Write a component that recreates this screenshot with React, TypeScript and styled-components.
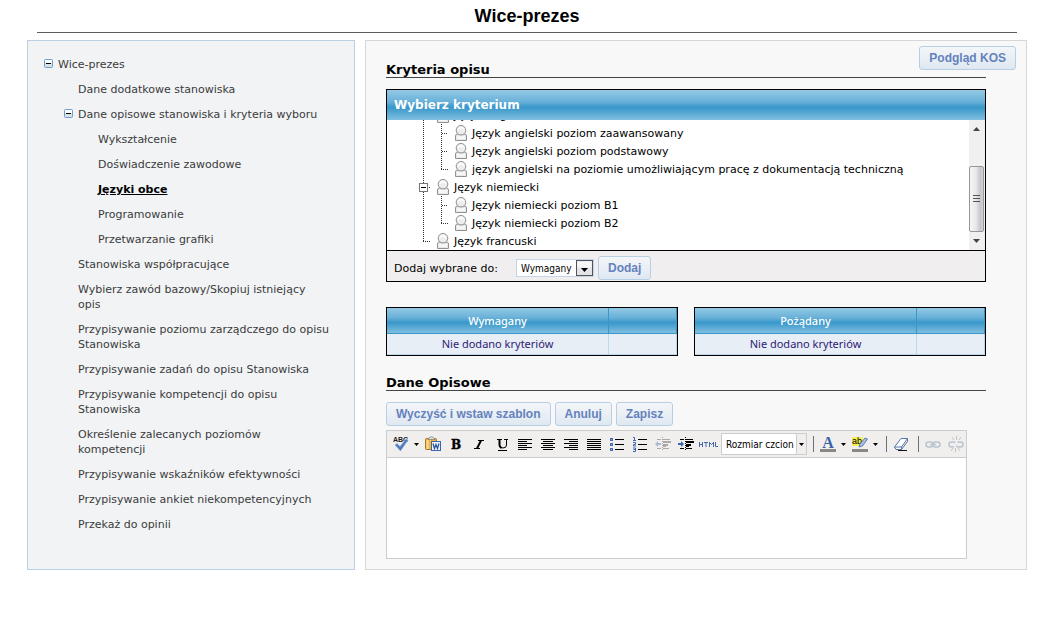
import React from "react";
import styled, { createGlobalStyle, css } from "styled-components";

const verdana = `Verdana, "DejaVu Sans", sans-serif`;
const compact = `Tahoma, "DejaVu Sans Condensed", sans-serif`;
const arial = `"Liberation Sans", Arial, sans-serif`;
const trebuchet = `"Noto Sans", sans-serif`;

const GlobalStyle = createGlobalStyle`
  *, *::before, *::after { box-sizing: border-box; }
  body { margin: 0; background: #fff; color: #000; font: 11px/15px ${verdana}; }
  ul { list-style: none; margin: 0; padding: 0; }
`;

const Page = styled.div`
  padding: 0 28px 24px 27px;
`;
const PageHeader = styled.header`
  margin: 0 10px 7px;
  border-bottom: 1px solid #5c5c5c;
  text-align: center;
`;
const PageTitle = styled.h1`
  margin: 0;
  padding: 6px 0 5px;
  font: bold 18px/21px ${arial};
`;
const Columns = styled.div`
  display: grid;
  grid-template-columns: 328px minmax(0, 1fr);
  gap: 10px;
`;

const Sidebar = styled.nav`
  border: 1px solid #b9cfe3;
  background: #f1f3f5;
  padding: 11px 24px 10px 10px;
`;
const NavList = styled.ul<{ $nested?: boolean }>`
  padding-left: ${(p) => (p.$nested ? 20 : 0)}px;
`;
const NavRow = styled.div`
  display: flex;
  align-items: flex-start;
  padding: 5px 0;
`;
const ToggleSlot = styled.span`
  flex: 0 0 20px;
  height: 13px;
  display: flex;
  align-items: center;
  padding-left: 6px;
`;
const ToggleButton = styled.button`
  width: 9px;
  height: 9px;
  padding: 0;
  border: 0;
  background: none;
  display: flex;
`;
const NavLink = styled.a<{ $active?: boolean }>`
  color: #3b3b3b;
  text-decoration: none;
  ${(p) => p.$active && css`
    color: #000;
    font-weight: bold;
    text-decoration: underline;
  `}
`;

const Main = styled.main`
  border: 1px solid #d7d7d7;
  background: #f8f8f8;
  padding: 5px 10px 10px 20px;
`;
const ActionBar = styled.div`
  display: flex;
  justify-content: flex-end;
  align-items: flex-start;
  height: 13px;
`;
const Content = styled.div`
  margin-right: 30px;
`;
const Button = styled.button`
  height: 24px;
  padding: 0 9px;
  border: 1px solid #b7cfe4;
  border-radius: 3px;
  background: linear-gradient(#f4f6f8, #dfe8f1);
  color: #6482bd;
  font: bold 12px/20px ${arial};
  white-space: nowrap;
`;
const SectionTitle = styled.h2`
  margin: 0;
  padding-top: 4px;
  border-bottom: 1px solid #444;
  font: bold 13px/14px ${verdana};
`;

const blueGradient = "linear-gradient(#94c9e5 0%, #67b0d8 40%, #3c99cb 56%, #3c99cb 60%, #80bfe0 100%)";

const Picker = styled.section`
  margin: 11px 0 25px;
  border: 1px solid #000;
`;
const PickerTitle = styled.h3`
  margin: 0;
  padding: 0 7px;
  background: ${blueGradient};
  color: #fff;
  font: bold 12px/30px ${verdana};
`;
const TreeArea = styled.div`
  display: flex;
  height: 130px;
  background: #fff;
`;
const TreeViewport = styled.div`
  flex: 1;
  display: flex;
  flex-direction: column;
  justify-content: flex-end;
  overflow: hidden;
  padding-left: 28px;
`;
const TreeRow = styled.li`
  display: flex;
  height: 18px;
  line-height: 20px;
  white-space: nowrap;
  svg { flex: none; }
`;
const TreeLabel = styled.span`
  padding-left: 3px;
`;
const ScrollTrack = styled.div`
  flex: 0 0 16px;
  display: flex;
  flex-direction: column;
  background: #f0f0f1;
  padding-right: 1px;
`;
const ScrollArrow = styled.button`
  height: 18px;
  padding: 0;
  border: 0;
  background: none;
  display: flex;
  align-items: center;
  justify-content: center;
`;
const ScrollThumb = styled.div`
  height: 66px;
  margin-top: auto;
  border: 1px solid #979797;
  border-radius: 2px;
  background: linear-gradient(90deg, #f5f5f5, #e9e9eb 45%, #c6c6ca 80%, #d4d4d8);
  display: flex;
  align-items: center;
  justify-content: center;
`;
const PickerFooter = styled.div`
  display: flex;
  align-items: center;
  height: 31px;
  padding: 3px 7px 0;
  border-top: 1px solid #000;
  background: #f0eeef;
`;
const FooterLabel = styled.label`
  flex: 0 0 121px;
  padding-top: 2px;
`;
const SelectFrame = styled.span<{ $width: number; $tone: string }>`
  display: flex;
  flex: 0 0 ${(p) => p.$width}px;
  min-width: 0;
  margin-left: 1px;
  border: 1px solid ${(p) => p.$tone};
  background: #fff;
`;
const SelectField = styled.select`
  appearance: none;
  flex: 1;
  min-width: 0;
  padding: 1px 0 0 4px;
  border: 0;
  background: #fff;
  color: #000;
  font: 10px/15px ${compact};
  text-overflow: clip;
`;
const FooterButtonSlot = styled.div`
  margin-left: 4px;
`;

const TablePair = styled.div`
  display: grid;
  grid-template-columns: 1fr 1fr;
  gap: 16px;
  margin-bottom: 16px;
`;
const CriteriaTable = styled.table`
  width: 100%;
  border: 1px solid #000;
  border-spacing: 0;
  table-layout: fixed;
  font: 11px/15px ${trebuchet};
  text-align: center;
  th {
    height: 26px;
    padding: 0;
    background: ${blueGradient};
    border-bottom: 1px solid #3996c9;
    border-right: 1px solid #3996c9;
    color: #fff;
    font-weight: 500;
  }
  td {
    height: 21px;
    padding: 0 0 2px;
    background: #e8eef5;
    border-right: 1px solid #bcd8e8;
    border-bottom: 1px solid #bcd8e8;
    color: #2e1a77;
  }
  col:last-child { width: 68px; }
`;

const ButtonRow = styled.div`
  display: flex;
  gap: 4px;
  margin: 11px 0 4px;
`;
const Editor = styled.div`
  margin-right: 19px;
  border: 1px solid #ccc;
`;
const Toolbar = styled.div`
  display: flex;
  align-items: center;
  height: 27px;
  padding: 0 0 0 2px;
  background: #f0efed;
  border-bottom: 1px solid #ccc;
`;
const Tool = styled.button<{ $narrow?: boolean }>`
  flex: 0 0 ${(p) => (p.$narrow ? 9 : 23)}px;
  height: 23px;
  padding: 0;
  border: 0;
  background: none;
  display: flex;
  align-items: center;
  justify-content: center;
`;
const Separator = styled.span`
  flex: 0 0 1px;
  height: 16px;
  margin: 0 2px 0 6px;
  background: #6a7078;
`;
const SizeArrow = styled.span`
  flex: 0 0 10px;
  height: 20px;
  border-left: 1px solid #ccc;
  background: #f0efed;
  display: flex;
  align-items: center;
  justify-content: center;
`;
const EditArea = styled.textarea`
  display: block;
  width: 100%;
  height: 100px;
  border: 0;
  padding: 4px;
  resize: none;
  outline: 0;
  background: #fff;
  font: 11px/15px ${verdana};
`;

function Minus() {
  return (
    <svg width="9" height="9" viewBox="0 0 9 9">
      <rect x=".5" y=".5" width="8" height="8" rx="1" fill="#d9dfe3" stroke="#6a9fce" />
      <path d="M1 1h7v3H1z" fill="#fff" />
      <path d="M2 4.5h5" stroke="#000" />
    </svg>
  );
}

type NavItem = { label: string; active?: boolean; children?: NavItem[] };
const navigation: NavItem[] = [
  {
    label: "Wice-prezes",
    children: [
      { label: "Dane dodatkowe stanowiska" },
      {
        label: "Dane opisowe stanowiska i kryteria wyboru",
        children: [
          { label: "Wykształcenie" },
          { label: "Doświadczenie zawodowe" },
          { label: "Języki obce", active: true },
          { label: "Programowanie" },
          { label: "Przetwarzanie grafiki" },
        ],
      },
      { label: "Stanowiska współpracujące" },
      { label: "Wybierz zawód bazowy/Skopiuj istniejący opis" },
      { label: "Przypisywanie poziomu zarządczego do opisu Stanowiska" },
      { label: "Przypisywanie zadań do opisu Stanowiska" },
      { label: "Przypisywanie kompetencji do opisu Stanowiska" },
      { label: "Określenie zalecanych poziomów kompetencji" },
      { label: "Przypisywanie wskaźników efektywności" },
      { label: "Przypisywanie ankiet niekompetencyjnych" },
      { label: "Przekaż do opinii" },
    ],
  },
];

function NavTree({ items, nested }: { items: NavItem[]; nested?: boolean }) {
  return (
    <NavList $nested={nested}>
      {items.map((item) => (
        <li key={item.label}>
          <NavRow>
            <ToggleSlot>
              {item.children && (
                <ToggleButton type="button" aria-label={`Zwiń ${item.label}`}><Minus /></ToggleButton>
              )}
            </ToggleSlot>
            <NavLink href="#" $active={item.active}>{item.label}</NavLink>
          </NavRow>
          {item.children && <NavTree items={item.children} nested />}
        </li>
      ))}
    </NavList>
  );
}

type Joint = "line" | "tee" | "end" | "open";
const jointPaths: Record<Joint, string> = {
  line: "M8.5 0v18",
  tee: "M8.5 0v18M9 9.5h6",
  end: "M8.5 0v9M8 9.5h7",
  open: "M8.5 0v5M8.5 14v4M14 9.5h2",
};
function Connector({ joint }: { joint: Joint }) {
  return (
    <svg width="18" height="18" viewBox="0 0 18 18">
      <path d={jointPaths[joint]} stroke="#333" strokeDasharray="1 1" fill="none" />
      {joint === "open" && (
        <>
          <rect x="4.5" y="5.5" width="8" height="8" fill="#fff" stroke="#777" />
          <path d="M6 9.5h5" stroke="#000" />
        </>
      )}
    </svg>
  );
}
function PersonIcon() {
  return (
    <svg width="18" height="18" viewBox="0 0 18 18">
      <path d="M4.5 16.500v-4.500q0-2 2-2h7q2 0 2 2v4.500z" fill="#e9e9e9" stroke="#929292" />
      <path d="M6 12h8v3H6z" fill="#f6f6f6" />
      <circle cx="10" cy="6.200" r="4.800" fill="#ededed" stroke="#929292" />
      <path d="M7 5.500q3-3.500 6 0" stroke="#fff" strokeWidth="1.500" fill="none" />
    </svg>
  );
}
const tree: { label: string; joints: Joint[] }[] = [
  { label: "Język angielski", joints: ["open"] },
  { label: "Język angielski poziom zaawansowany", joints: ["line", "tee"] },
  { label: "Język angielski poziom podstawowy", joints: ["line", "tee"] },
  { label: "język angielski na poziomie umożliwiającym pracę z dokumentacją techniczną", joints: ["line", "end"] },
  { label: "Język niemiecki", joints: ["open"] },
  { label: "Język niemiecki poziom B1", joints: ["line", "tee"] },
  { label: "Język niemiecki poziom B2", joints: ["line", "end"] },
  { label: "Język francuski", joints: ["end"] },
];

function Caret() {
  return <svg width="5" height="3" viewBox="0 0 5 3"><path d="M0 0h5L2.5 3z" fill="#000" /></svg>;
}
function ArrowBox() {
  return (
    <svg width="17" height="16" viewBox="0 0 17 16">
      <rect x=".5" y=".5" width="16" height="15" fill="#e4e4e8" stroke="#555" />
      <path d="M1.5 1.500h14v6h-14z" fill="#f7f7f8" />
      <path d="M5 8h7l-3.500 4z" fill="#000" />
    </svg>
  );
}

function Glyph({ children }: { children: React.ReactNode }) {
  return <svg width="16" height="16" viewBox="0 0 16 16" fill="none">{children}</svg>;
}
function Lines({ rows }: { rows: [number, number][] }) {
  return (
    <Glyph>
      <path d={rows.map(([x, w], i) => `M${x} ${3.5 + i * 2}h${w}`).join("")} stroke="#000" />
    </Glyph>
  );
}
const alignments: [string, [number, number][]][] = [
  ["Do lewej", [[1, 14], [1, 9], [1, 14], [1, 9], [1, 14], [1, 9]]],
  ["Wyśrodkuj", [[1, 14], [3, 10], [1, 14], [3, 10], [1, 14], [3, 10]]],
  ["Do prawej", [[1, 14], [6, 9], [1, 14], [6, 9], [1, 14], [6, 9]]],
  ["Wyjustuj", [[1, 14], [1, 14], [1, 14], [1, 14], [1, 14], [1, 14]]],
];
function IndentIcon({ back }: { back?: boolean }) {
  const ink = back ? "#aaa" : "#000";
  return (
    <Glyph>
      <path d="M2 3.500h4M8 3.500h7M8 10.500h3M2 12.500h4M8 12.500h6" stroke={ink} />
      <path d="M8 6h8M8 9h5" stroke={ink} strokeWidth="2" />
      <path d="M7.500 1v14" stroke={ink} strokeDasharray="1 1" />
      <path d={back ? "M0 8l3-3v2h3v2H3v2z" : "M6 8L3 5v2H0v2h3v2z"} fill={back ? "#a9bbd3" : "#3765b0"} />
    </Glyph>
  );
}
function LinkIcon({ broken }: { broken?: boolean }) {
  return (
    <Glyph>
      <rect x="1" y="6" width="7" height="5" rx="2.500" stroke="#b9c4cf" strokeWidth="1.500" />
      <rect x="8" y="6" width="7" height="5" rx="2.500" stroke="#b9c4cf" strokeWidth="1.500" />
      {broken ? (
        <>
          <path d="M9 4L6.500 13" stroke="#f0efed" strokeWidth="2" />
          <path d="M8.500 0v4M4 1l2 3M13 1l-2 3M7.500 16v-4M3 15l2-3M12 15l-2-3" stroke="#c3c5c7" />
        </>
      ) : (
        <path d="M5 8.500h6" stroke="#b9c4cf" strokeWidth="1.500" />
      )}
    </Glyph>
  );
}

function EditorToolbar() {
  return (
    <Toolbar role="toolbar">
      <Tool type="button" aria-label="Sprawdź pisownię">
        <Glyph>
          <text x="0" y="6" fontFamily="Liberation Sans" fontWeight="bold" fontSize="7" fill="#222">ABC</text>
          <path d="M2 9l2-1.500 3 3L13 3l2 1-7.500 11z" fill="#4d79bd" stroke="#8fafdc" strokeWidth=".6" />
        </Glyph>
      </Tool>
      <Tool type="button" $narrow aria-label="Opcje pisowni"><Caret /></Tool>
      <Tool type="button" aria-label="Wklej z Worda">
        <Glyph>
          <rect x=".5" y="2.500" width="11" height="11" rx="1" fill="#edb647" stroke="#a97724" />
          <path d="M1.500 4h2v9h-2z" fill="#fbdc8d" />
          <path d="M3 3.500L5 1h3l2 2.500z" fill="#e5e5e5" stroke="#777" strokeWidth=".7" />
          <rect x="6.500" y="5.500" width="9" height="9" fill="#eef3fb" stroke="#3e66ab" />
          <path d="M8 7.500l1.500 5L11 8.500l1.500 4L14 7.500" stroke="#234f9e" strokeWidth="1.200" />
        </Glyph>
      </Tool>
      <Tool type="button" aria-label="Pogrubienie">
        <Glyph><text x="8" y="13" textAnchor="middle" fontFamily="DejaVu Serif" fontWeight="bold" fontSize="12" fill="#000" stroke="#000" strokeWidth=".4">B</text></Glyph>
      </Tool>
      <Tool type="button" aria-label="Kursywa">
        <Glyph><path d="M7 4.500h6M3 12.500h6" stroke="#000" /><path d="M10 4.500L6 12.500" stroke="#000" strokeWidth="2" /></Glyph>
      </Tool>
      <Tool type="button" aria-label="Podkreślenie">
        <Glyph>
          <path d="M3 3.500h5M10 3.500h4M12.500 4v5q0 3-3.500 3T5.500 9" stroke="#000" />
          <path d="M5.500 4v5q0 2 2 3" stroke="#000" strokeWidth="2" />
          <path d="M4 14.500h9" stroke="#000" />
        </Glyph>
      </Tool>
      {alignments.map(([name, rows]) => (
        <Tool type="button" key={name} aria-label={name}><Lines rows={rows} /></Tool>
      ))}
      <Tool type="button" aria-label="Lista punktowana">
        <Glyph>
          <path d="M6 3.500h9M6 8.500h9M6 13.500h9" stroke="#000" />
          <path d="M1 3.500h3M1 8.500h3M1 13.500h3" stroke="#4569ae" strokeWidth="3" />
          <path d="M2 3.500h1M2 8.500h1M2 13.500h1" stroke="#8fabd9" />
        </Glyph>
      </Tool>
      <Tool type="button" aria-label="Lista numerowana">
        <Glyph>
          <path d="M6 3.500h9M6 8.500h9M6 13.500h9" stroke="#000" />
          <path d="M1 1.500h1.500v3M1 4.500h3M1 6.500h2.500v2H1.500v1.500H4M1 12h2.500v3.500H1M1.500 13.500h2" stroke="#3f66ae" />
        </Glyph>
      </Tool>
      <Tool type="button" aria-label="Zmniejsz wcięcie"><IndentIcon back /></Tool>
      <Tool type="button" aria-label="Zwiększ wcięcie"><IndentIcon /></Tool>
      <Tool type="button" aria-label="HTML">
        <svg width="19" height="7" viewBox="0 0 19 7" fill="none" stroke="#4468a8">
          <path d="M.5 1v5M3.500 1v5M1 3.500h2M5 1.500h4M7 2v4M10.500 1v5M14.500 1v5M11 2l1.500 1.500L14 2M16.500 1v4.500H19" />
        </svg>
      </Tool>
      <SelectFrame $width={86} $tone="#ccc">
        <SelectField aria-label="Rozmiar czcionki">
          <option>Rozmiar czcion</option>
        </SelectField>
        <SizeArrow><Caret /></SizeArrow>
      </SelectFrame>
      <Separator />
      <Tool type="button" aria-label="Kolor tekstu">
        <Glyph>
          <text x="8" y="12" textAnchor="middle" fontFamily="Liberation Serif" fontWeight="bold" fontSize="16" fill="#3a62a8">A</text>
          <path d="M0 14.500h16" stroke="#888" strokeWidth="3" />
        </Glyph>
      </Tool>
      <Tool type="button" $narrow aria-label="Wybierz kolor tekstu"><Caret /></Tool>
      <Tool type="button" aria-label="Kolor tła">
        <Glyph>
          <path d="M0 1h11v9H0z" fill="#f5ee55" />
          <text x="0" y="8" fontFamily="Liberation Sans" fontSize="9" fill="#000">ab</text>
          <path d="M7 11l1-3 5-6 2.500 1-5 7z" fill="#a9c3e6" stroke="#44679f" strokeWidth=".8" />
          <path d="M0 14.500h16" stroke="#888" strokeWidth="3" />
        </Glyph>
      </Tool>
      <Tool type="button" $narrow aria-label="Wybierz kolor tła"><Caret /></Tool>
      <Separator />
      <Tool type="button" aria-label="Usuń formatowanie">
        <Glyph>
          <path d="M1.500 11L8 2.500h6.500L8.500 11v2.500H3z" fill="#fff" stroke="#5576a8" />
          <path d="M1.500 11h7M8.500 13.500l6-8v-3" stroke="#5576a8" />
          <path d="M5 14.500h9" stroke="#111" />
        </Glyph>
      </Tool>
      <Separator />
      <Tool type="button" aria-label="Wstaw link" disabled><LinkIcon /></Tool>
      <Tool type="button" aria-label="Usuń link" disabled><LinkIcon broken /></Tool>
    </Toolbar>
  );
}

function Criteria({ title }: { title: string }) {
  return (
    <CriteriaTable>
      <colgroup><col /><col /></colgroup>
      <thead><tr><th scope="col">{title}</th><th aria-label="Akcje" /></tr></thead>
      <tbody><tr><td>Nie dodano kryteriów</td><td /></tr></tbody>
    </CriteriaTable>
  );
}

export default function App() {
  return (
    <Page>
      <GlobalStyle />
      <PageHeader><PageTitle>Wice-prezes</PageTitle></PageHeader>
      <Columns>
        <Sidebar><NavTree items={navigation} /></Sidebar>
        <Main>
          <ActionBar><Button type="button">Podgląd KOS</Button></ActionBar>
          <Content>
            <SectionTitle>Kryteria opisu</SectionTitle>
            <Picker>
              <PickerTitle>Wybierz kryterium</PickerTitle>
              <TreeArea>
                <TreeViewport>
                  <ul>
                    {tree.map((node) => (
                      <TreeRow key={node.label}>
                        {node.joints.map((joint, i) => <Connector key={i} joint={joint} />)}
                        <PersonIcon />
                        <TreeLabel>{node.label}</TreeLabel>
                      </TreeRow>
                    ))}
                  </ul>
                </TreeViewport>
                <ScrollTrack>
                  <ScrollArrow type="button" aria-label="W górę">
                    <svg width="7" height="4" viewBox="0 0 7 4"><path d="M0 4h7L3.500 0z" fill="#444" /></svg>
                  </ScrollArrow>
                  <ScrollThumb>
                    <svg width="7" height="8" viewBox="0 0 7 8"><path d="M0 .5h7M0 3.500h7M0 6.500h7" stroke="#555" /></svg>
                  </ScrollThumb>
                  <ScrollArrow type="button" aria-label="W dół">
                    <svg width="7" height="4" viewBox="0 0 7 4"><path d="M0 0h7L3.500 4z" fill="#444" /></svg>
                  </ScrollArrow>
                </ScrollTrack>
              </TreeArea>
              <PickerFooter>
                <FooterLabel htmlFor="target">Dodaj wybrane do:</FooterLabel>
                <SelectFrame $width={78} $tone="#c3d5ea">
                  <SelectField id="target">
                    <option>Wymagany</option>
                    <option>Pożądany</option>
                  </SelectField>
                  <ArrowBox />
                </SelectFrame>
                <FooterButtonSlot><Button type="button">Dodaj</Button></FooterButtonSlot>
              </PickerFooter>
            </Picker>
            <TablePair>
              <Criteria title="Wymagany" />
              <Criteria title="Pożądany" />
            </TablePair>
            <SectionTitle>Dane Opisowe</SectionTitle>
            <ButtonRow>
              <Button type="button">Wyczyść i wstaw szablon</Button>
              <Button type="button">Anuluj</Button>
              <Button type="button">Zapisz</Button>
            </ButtonRow>
            <Editor>
              <EditorToolbar />
              <EditArea aria-label="Dane opisowe" />
            </Editor>
          </Content>
        </Main>
      </Columns>
    </Page>
  );
}
